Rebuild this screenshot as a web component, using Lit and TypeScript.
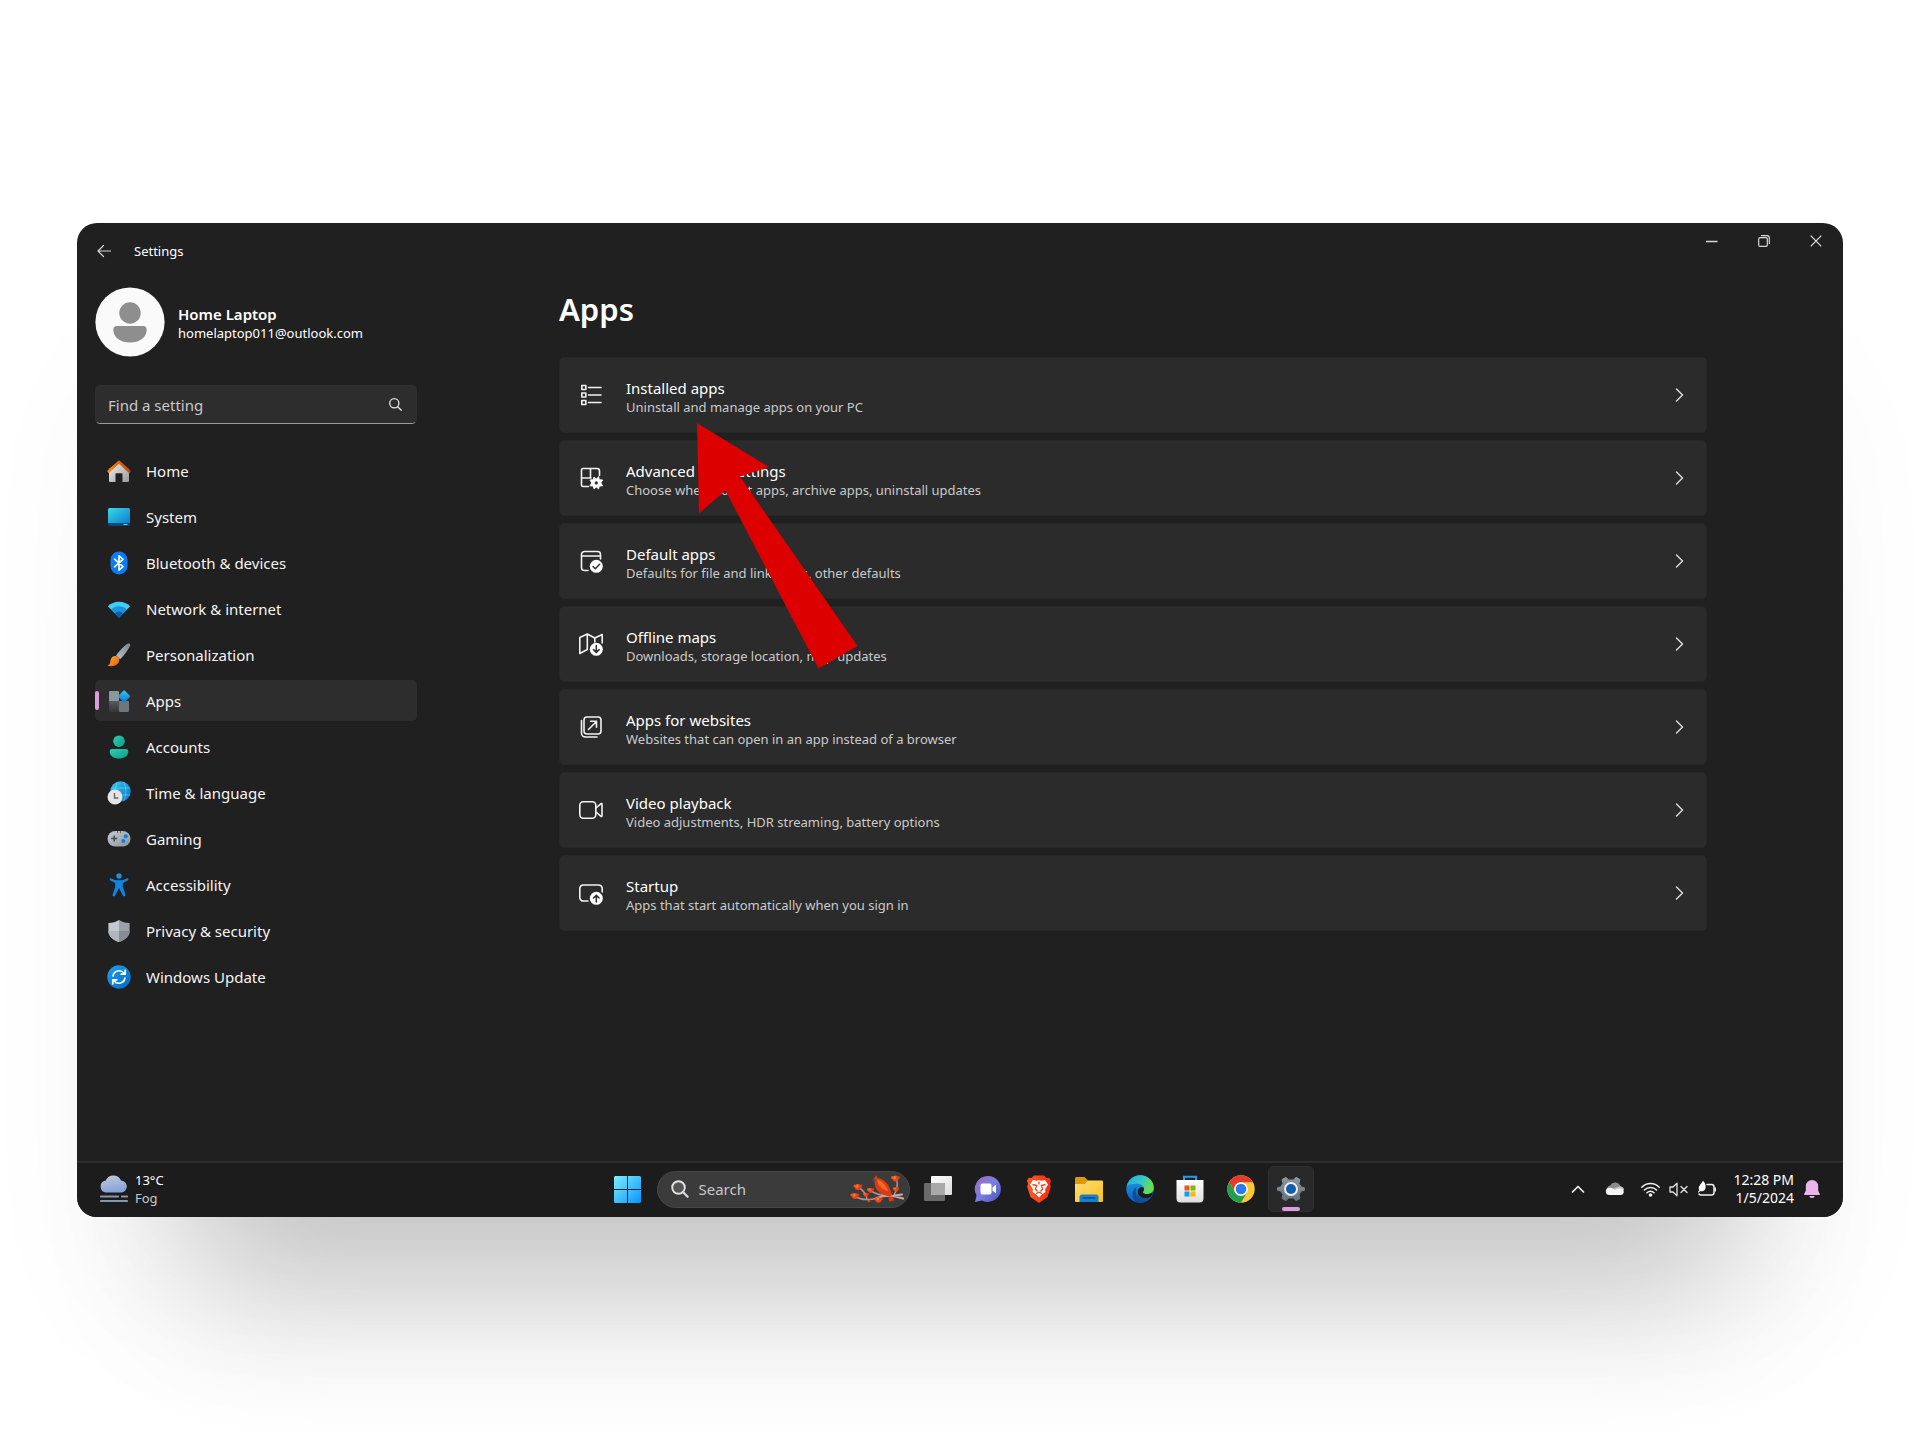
import { LitElement, html, svg, css, TemplateResult } from "lit";
import { customElement } from "lit/decorators.js";
import { classMap } from "lit/directives/class-map.js";

const icon = (size: number, box: string, body: TemplateResult) =>
  html`<svg width=${size} height=${size} viewBox=${box} fill="none" aria-hidden="true">${body}</svg>`;

const reset = css`
  * { box-sizing: border-box; }
  button, input, a { font: inherit; color: inherit; }
  button { background: none; border: 0; padding: 0; text-align: left; cursor: pointer; }
  a { text-decoration: none; }
  svg { display: block; flex: none; }
`;

/* ---------- sidebar ---------- */

const navItems: { label: string; art: TemplateResult; active?: boolean }[] = [
  {
    label: "Home",
    art: svg`
      <defs><linearGradient id="hw" x1="0" y1="0" x2="1" y2="1"><stop stop-color="#f4f4f4"/><stop offset="1" stop-color="#9a9a9a"/></linearGradient>
      <linearGradient id="hr" x1="0" y1="0" x2="1" y2="0"><stop stop-color="#f58a12"/><stop offset="1" stop-color="#c9440c"/></linearGradient></defs>
      <path d="M2 10 12 2.500l10 7.500v12a1 1 0 0 1-1 1h-5.500v-8a.8.8 0 0 0-.8-.8H9.300a.8.8 0 0 0-.8.8v8H3a1 1 0 0 1-1-1z" fill="url(#hw)"/>
      <path d="M1.800 12.200 12 3l10.200 9.200" stroke="url(#hr)" stroke-width="2.800" stroke-linecap="round" stroke-linejoin="round"/>`,
  },
  {
    label: "System",
    art: svg`
      <defs><linearGradient id="sy" x1="0" y1="0" x2="1" y2="1"><stop stop-color="#34dbe6"/><stop offset="1" stop-color="#0f7bd0"/></linearGradient></defs>
      <rect x="1" y="3" width="22" height="18" rx="1.500" fill="#0c4a76"/>
      <path d="M2.500 3h19A1.500 1.500 0 0 1 23 4.500V18H1V4.500A1.500 1.500 0 0 1 2.500 3z" fill="url(#sy)"/>
      <path d="M16.500 19.500h4" stroke="#7fc4e8" stroke-width="1"/>`,
  },
  {
    label: "Bluetooth & devices",
    art: svg`<rect x="3.500" y="0.500" width="17" height="23" rx="8.500" fill="#0a7cf5"/>
      <path d="M7.600 8.200 16 15.600l-4 3.600V4.800l4 3.600-8.400 7.400" stroke="#fff" stroke-width="1.600" stroke-linejoin="round" stroke-linecap="round"/>`,
  },
  {
    label: "Network & internet",
    art: svg`<path d="M12 20.500.800 9.300a15.900 15.900 0 0 1 22.400 0z" fill="#42cdf5"/>
      <path d="M12 20.500 4.200 12.600a11 11 0 0 1 15.600 0z" fill="#1793e2"/>
      <path d="M12 20.500 8 16.200a5.700 5.700 0 0 1 8 0z" fill="#0b5cae"/>`,
  },
  {
    label: "Personalization",
    art: svg`
      <defs><linearGradient id="pb" x1="1" y1="0" x2="0" y2="1"><stop stop-color="#7d8790"/><stop offset="1" stop-color="#b9c0c6"/></linearGradient>
      <linearGradient id="po" x1="0" y1="0" x2="1" y2="1"><stop stop-color="#ffb02e"/><stop offset="1" stop-color="#e8590c"/></linearGradient></defs>
      <path d="M21 .600c1.400-.7 2.800.6 2.100 2.100-1.900 4.200-5.700 9.500-10 13.600l-4-3.900C13 7.600 17.300 2.500 21 .600z" fill="url(#pb)"/>
      <path d="M8.200 13c2.600.2 4.200 2 4.100 4.300-.2 3.600-3.800 5.900-7.800 5.900-1.800 0-3.300-.4-3.900-1 2.400-.5 2.400-2.300 2.900-4.800.5-2.700 2.300-4.600 4.700-4.400z" fill="url(#po)"/>`,
  },
  {
    label: "Apps",
    active: true,
    art: svg`
      <defs><linearGradient id="ad" x1="0" y1="0" x2="1" y2="1"><stop stop-color="#35c7f0"/><stop offset="1" stop-color="#0a74cf"/></linearGradient>
      <linearGradient id="ag" x1="0" y1="0" x2="0" y2="1"><stop stop-color="#555a5f"/><stop offset="1" stop-color="#33373a"/></linearGradient></defs>
      <rect x="2" y="2" width="10" height="10.500" rx="1" fill="#8d959d"/>
      <rect x="2" y="12" width="10.500" height="11" rx="1" fill="url(#ag)"/>
      <rect x="12" y="12" width="10" height="11" rx="1" fill="#6f767c"/>
      <rect x="12.600" y="2.800" width="9" height="9" rx="1" transform="rotate(45 17.100 7.300)" fill="url(#ad)"/>`,
  },
  {
    label: "Accounts",
    art: svg`
      <defs><linearGradient id="ac" x1="0" y1="0" x2="1" y2="1"><stop stop-color="#2bd0b4"/><stop offset="1" stop-color="#0d9b86"/></linearGradient></defs>
      <circle cx="12" cy="6.200" r="5.800" fill="url(#ac)"/>
      <path d="M5 14h14a2.300 2.300 0 0 1 2.300 2.400c0 4.500-4.300 7.100-9.300 7.100s-9.300-2.600-9.300-7.100A2.300 2.300 0 0 1 5 14z" fill="url(#ac)"/>`,
  },
  {
    label: "Time & language",
    art: svg`
      <defs><linearGradient id="tl" x1="0" y1="0" x2="1" y2="1"><stop stop-color="#35cdea"/><stop offset="1" stop-color="#0a6fc9"/></linearGradient></defs>
      <circle cx="13.500" cy="10.500" r="10.200" fill="url(#tl)"/>
      <path d="M4.500 7h18M4 14h19M10 1.500c-2 6-2 12 0 18M17 1.500c2.500 6 2.500 12 0 18" stroke="#7be4f7" stroke-opacity=".6" stroke-width=".9"/>
      <circle cx="8" cy="16" r="7.500" fill="#e4e4e4"/>
      <path d="M7.500 12v5h3.800" stroke="#666" stroke-width="1.400"/>`,
  },
  {
    label: "Gaming",
    art: svg`
      <defs><linearGradient id="gm" x1="0" y1="0" x2="1" y2="1"><stop stop-color="#c5cad0"/><stop offset="1" stop-color="#8d949c"/></linearGradient></defs>
      <rect x=".500" y="4" width="23" height="15.500" rx="7.750" fill="url(#gm)"/>
      <path d="M7.200 8.500v6M4.200 11.500h6" stroke="#454b52" stroke-width="1.500"/>
      <path d="M10.500 4v2M13.500 4v2" stroke="#5c636b" stroke-width="1"/>
      <circle cx="18.800" cy="9.200" r="2" fill="#0f7fdb"/><circle cx="16.300" cy="14" r="2" fill="#0f7fdb"/>`,
  },
  {
    label: "Accessibility",
    art: svg`<circle cx="12" cy="3" r="2.700" fill="#1590e8"/>
      <path d="M4.300 5.400c5 2.500 10.400 2.500 15.400 0 1.500-.6 2.400 1.400 1 2.100L15.800 10v4l2.600 7.600c.5 1.700-1.800 2.500-2.600.9L12 15l-3.800 7.500c-.8 1.600-3.100.8-2.600-.9L8.200 14v-4L3.300 7.500c-1.400-.7-.5-2.700 1-2.100z" fill="#0f84e0"/>`,
  },
  {
    label: "Privacy & security",
    art: svg`<path d="M12 1c3 2 6.500 3 10.600 3v8c0 5.500-4.600 9-10.600 11z" fill="#9aa1a9"/>
      <path d="M12 1C9 3 5.500 4 1.400 4v8c0 5.500 4.600 9 10.600 11z" fill="#c3c8ce"/>
      <path d="M12 12h10.600c0 5.500-4.600 9-10.600 11z" fill="#868d95"/><path d="M12 12H1.400c0 5.500 4.600 9 10.600 11z" fill="#b0b6bc"/>`,
  },
  {
    label: "Windows Update",
    art: svg`
      <defs><linearGradient id="wu" x1="0" y1="0" x2="1" y2="1"><stop stop-color="#22a1ec"/><stop offset="1" stop-color="#0069c8"/></linearGradient></defs>
      <circle cx="12" cy="12" r="11.700" fill="url(#wu)"/>
      <path d="M6 11a6.300 6.300 0 0 1 11-3m1.200-2.800v4h-4M18 13a6.300 6.300 0 0 1-11 3m-1.200 2.800v-4h4" stroke="#fff" stroke-width="1.700" stroke-linecap="round" stroke-linejoin="round"/>`,
  },
];

@customElement("settings-sidebar")
export class SettingsSidebar extends LitElement {
  static styles = [
    reset,
    css`
      :host { display: block; width: 322px; flex: none; }
      .account { display: flex; align-items: center; gap: 13px; width: 100%; }
      .who { display: flex; flex-direction: column; padding-top: 2px; }
      .name { font-size: 15px; line-height: 20px; font-weight: 600; }
      .mail { font-size: 13px; line-height: 18px; }
      .search {
        display: flex; align-items: center; height: 39px; margin: 28px 0 26px;
        padding: 0 14px 0 12px; background: #2d2d2d; border: 1px solid #303030;
        border-bottom-color: #9a9a9a; border-radius: 5px;
      }
      .search input {
        flex: 1; min-width: 0; background: none; border: 0; outline: 0; padding: 0;
        font-size: 15px; line-height: 20px; color: #fff;
      }
      .search input::placeholder { color: #c8c8c8; opacity: 1; }
      ul { list-style: none; margin: 0; padding: 0; display: grid; gap: 5px; }
      .item {
        display: flex; align-items: center; gap: 15px; height: 41px; padding: 0 12px;
        position: relative; border-radius: 5px; font-size: 15px; line-height: 20px; color: #f4f4f4;
      }
      .active { background: #2d2d2d; }
      .active::before {
        content: ""; position: absolute; left: 0; top: 11px; width: 4px; height: 19px;
        border-radius: 2px; background: #dd9be0;
      }
    `,
  ];

  render() {
    return html`
      <button class="account">
        ${icon(70, "0 0 70 70", svg`
          <circle cx="35" cy="35" r="34.600" fill="#fafafa"/>
          <circle cx="35" cy="26" r="10.700" fill="#8e8e8e"/>
          <path d="M22 39h26a3.700 3.700 0 0 1 3.700 3.700C51.700 50.500 44.500 55.500 35 55.500S18.300 50.500 18.300 42.700A3.700 3.700 0 0 1 22 39z" fill="#8e8e8e"/>`)}
        <span class="who"><span class="name">Home Laptop</span><span class="mail">homelaptop011@outlook.com</span></span>
      </button>
      <label class="search">
        <input type="text" placeholder="Find a setting" aria-label="Find a setting" />
        ${icon(13, "0 0 13 13", svg`<circle cx="5.300" cy="5.300" r="4.600" stroke="#e6e6e6" stroke-width="1.300"/><path d="m8.700 8.700 3.900 3.900" stroke="#e6e6e6" stroke-width="1.300"/>`)}
      </label>
      <nav>
        <ul>
          ${navItems.map(
            (n) => html`<li>
              <a href="#" class=${classMap({ item: true, active: !!n.active })}>${icon(24, "0 0 24 24", n.art)}<span>${n.label}</span></a>
            </li>`
          )}
        </ul>
      </nav>
    `;
  }
}

/* ---------- settings list ---------- */

const cards: { title: string; note: string; art: TemplateResult }[] = [
  {
    title: "Installed apps",
    note: "Uninstall and manage apps on your PC",
    art: svg`<path d="M2.800 2.500h4v4h-4zM2.800 10h4v4h-4zM2.800 17.500h4v4h-4zM9.500 4.500H22M9.500 12H22M9.500 19.500H22"/>`,
  },
  {
    title: "Advanced app settings",
    note: "Choose where to get apps, archive apps, uninstall updates",
    art: svg`<path d="M9.500 20.500H4A1.500 1.500 0 0 1 2.500 19V4A1.500 1.500 0 0 1 4 2.500h14A2.500 2.500 0 0 1 20.500 5v4.500M2.500 12h9.500M11.500 2.500V12"/>
      <path d="m17.300 13-2.300-2-.7 2.800-3.300.2 1.800 2.900-1.800 2.900 3.300.2.700 2.800 2.300-1.800 2.300 1.800.7-2.800 3.300-.2-1.800-2.900 1.800-2.900-3.300-.2-.7-2.800z" fill="#fff" stroke="#fff" stroke-width="1"/>
      <circle cx="17.300" cy="16.900" r="1.600" fill="#2b2b2b" stroke="none"/>`,
  },
  {
    title: "Default apps",
    note: "Defaults for file and link types, other defaults",
    art: svg`<path d="M9 21.500H5.500a3 3 0 0 1-3-3v-13a3 3 0 0 1 3-3h13a3 3 0 0 1 3 3V10M2.500 7h19"/>
      <circle cx="17.300" cy="17.300" r="6.500" fill="#fff" stroke="none"/><path d="m14 17.500 2.300 2.200 4.300-4.400" stroke="#2b2b2b" stroke-width="1.400"/>`,
  },
  {
    title: "Offline maps",
    note: "Downloads, storage location, map updates",
    art: svg`<path d="m.800 5.500 7.500-3.500 7.500 4 7.400-3.500V11M.800 5.500v16l7.500-4M8.300 2v15.500M15.800 6v4"/>
      <circle cx="17.300" cy="17.300" r="6.500" fill="#fff" stroke="none"/><path d="M17.300 13.600v6.800m-2.800-2.800 2.800 2.800 2.800-2.800" stroke="#2b2b2b" stroke-width="1.500"/>`,
  },
  {
    title: "Apps for websites",
    note: "Websites that can open in an app instead of a browser",
    art: svg`<rect x="5" y="2" width="17" height="17" rx="3"/><path d="M2.500 5.500v12.500a4 4 0 0 0 4 4h11.500M9.500 14.500l8-8M11.500 6.200h6v6"/>`,
  },
  {
    title: "Video playback",
    note: "Video adjustments, HDR streaming, battery options",
    art: svg`<rect x=".800" y="3.800" width="16" height="16.400" rx="3.500"/><path d="m17 10 5-4.300c.5-.4 1-.1 1 .5v11.600c0 .6-.5.900-1 .5L17 14"/>`,
  },
  {
    title: "Startup",
    note: "Apps that start automatically when you sign in",
    art: svg`<path d="M9 20H4.500a3.500 3.500 0 0 1-3.700-3.500v-9A3.500 3.500 0 0 1 4.500 4h15a3.500 3.500 0 0 1 3.700 3.500V11"/>
      <circle cx="17.300" cy="17.300" r="6.500" fill="#fff" stroke="none"/><path d="M17.300 21v-6.800m-2.800 2.800 2.800-2.800 2.800 2.800" stroke="#2b2b2b" stroke-width="1.500"/>`,
  },
];

@customElement("settings-list")
export class SettingsList extends LitElement {
  static styles = [
    reset,
    css`
      :host { display: block; flex: 1; min-width: 0; padding: 0 136px 0 142px; }
      h1 { margin: 0 0 26px; font-size: 31px; line-height: 44px; font-weight: 600; color: #fff; }
      .cards { position: relative; display: grid; gap: 7px; }
      .card {
        display: flex; align-items: center; width: 100%; min-height: 76px; padding: 0 20px 0 19px; gap: 23px;
        background: #2b2b2b; border: 1px solid #272727; border-radius: 5px;
      }
      .text { flex: 1; display: flex; flex-direction: column; padding-top: 3px; }
      .title { font-size: 15px; line-height: 20px; color: #fff; }
      .note { font-size: 13px; line-height: 18px; color: #cacaca; }
      .pointer { position: absolute; left: 138px; top: 66px; pointer-events: none; }
    `,
  ];

  render() {
    return html`
      <h1>Apps</h1>
      <div class="cards">
        ${cards.map(
          (c) => html`<button class="card">
            ${icon(24, "0 0 24 24", svg`<g stroke="#f2f2f2" stroke-width="1.600" stroke-linejoin="round" stroke-linecap="round">${c.art}</g>`)}
            <span class="text"><span class="title">${c.title}</span><span class="note">${c.note}</span></span>
            ${icon(14, "0 0 14 14", svg`<path d="m4.500 1 6 6-6 6" stroke="#d8d8d8" stroke-width="1.500" stroke-linecap="round" stroke-linejoin="round"/>`)}
          </button>`
        )}
        <svg class="pointer" width="161" height="246" viewBox="0 0 161 246" aria-hidden="true">
          <path d="M0 0 72 44 43 53.500 160.500 223 121.500 245.500 28.500 67.500 2 90.500z" fill="#dc0000" />
        </svg>
      </div>
    `;
  }
}

/* ---------- taskbar ---------- */

const pinned: { name: string; active?: boolean; art: TemplateResult }[] = [
  {
    name: "Task view",
    art: svg`<defs><linearGradient id="tv" x1="0" y1="0" x2="1" y2="1"><stop stop-color="#fff"/><stop offset="1" stop-color="#dcdcdc"/></linearGradient></defs>
      <rect x="0" y="8" width="21" height="18" rx="1" fill="#6a6a6a"/>
      <rect x="7" y="1" width="21" height="19" rx="1" fill="url(#tv)"/><path d="M7 8h14v12H7z" fill="#a9a9a9"/>`,
  },
  {
    name: "Chat",
    art: svg`<defs><linearGradient id="ch" x1="0" y1="0" x2="1" y2="1"><stop stop-color="#9a6fb8"/><stop offset=".5" stop-color="#7b7fe0"/><stop offset="1" stop-color="#4a4fc0"/></linearGradient></defs>
      <path d="M14 1a13 13 0 1 1-6.200 24.500L1 27l1.600-6.500A13 13 0 0 1 14 1z" fill="url(#ch)"/>
      <rect x="6.500" y="8.500" width="11" height="11" rx="2" fill="#fff"/><path d="m18.500 12.300 3.500-2.600v8.600l-3.500-2.600z" fill="#fff"/>`,
  },
  {
    name: "Brave",
    art: svg`<defs><linearGradient id="br" x1="0" y1="0" x2="1" y2="0"><stop stop-color="#ff5a20"/><stop offset="1" stop-color="#fb2a10"/></linearGradient></defs>
      <path d="M9 .500h10l2.500 2.600 2.700-.3 1.800 3-1 3 .8 3.200-3.300 10L14 28l-8.500-6L2.200 12 3 8.800l-1-3 1.800-3 2.700.3z" fill="url(#br)"/>
      <path d="m8 5 3.500.8L14 5.300l2.500.5L20 5l3 4.500-3 5 .5 2.500-3.700 2.500L14 22.500l-2.800-3L7.500 17l.5-2.500-3-5z" fill="#fff"/>
      <path d="m7.500 9.500 4.200 1-1.300 3.500 2.100 2.500M20.500 9.500l-4.200 1 1.300 3.500-2.100 2.500M14 6.500v3M11 18.500l3-1.300 3 1.300" stroke="#fb4018" stroke-width="1.300"/>`,
  },
  {
    name: "File Explorer",
    art: svg`<defs><linearGradient id="fe" x1="0" y1="0" x2="1" y2="1"><stop stop-color="#ffe07a"/><stop offset="1" stop-color="#fcbf1a"/></linearGradient></defs>
      <path d="M0 3.500A1.500 1.500 0 0 1 1.500 2h8L12.500 5v6H0z" fill="#dc9a06"/>
      <path d="M0 9h10l2.500-3.500H27A1 1 0 0 1 28 6.500V26a1 1 0 0 1-1 1H1a1 1 0 0 1-1-1z" fill="url(#fe)"/>
      <path d="M4.500 27v-5A2.500 2.500 0 0 1 7 19.500h14a2.500 2.500 0 0 1 2.500 2.500v5z" fill="#1680d0"/><path d="M7.500 23h13" stroke="#0a4f96" stroke-width="1.600"/>`,
  },
  {
    name: "Microsoft Edge",
    art: svg`<defs><linearGradient id="e1" x1="0" y1="0" x2="1" y2=".3"><stop stop-color="#2aa7e8"/><stop offset=".6" stop-color="#37c8c0"/><stop offset="1" stop-color="#6adf4c"/></linearGradient>
      <linearGradient id="e2" x1="0" y1="0" x2="0" y2="1"><stop stop-color="#1b9de2"/><stop offset="1" stop-color="#0b63c6"/></linearGradient></defs>
      <circle cx="14" cy="14" r="13.700" fill="url(#e2)"/>
      <path d="M1 11C2.500 4.500 8 .300 14.300.300 22 .300 27.800 6 27.800 12.500c0 4-3 6.500-6.800 6.500-2.500 0-4.200-.8-4.200-1.800 0-.7 1.200-1.200 1.200-3.300C18 11 15 8.800 10.500 8.800 6.500 8.800 3 9.500 1 11z" fill="url(#e1)"/>
      <path d="M11 12c-3 4.500-.3 12.500 6.500 13.500 3 .4 5.500-.5 7.800-3.500-2.600 3.800-6.500 5.800-11 5.700C8.500 27.500 6 23 6.500 18.500 7 15 9 13 11 12z" fill="#0c4f98"/>
      <path d="M16.900 17.200c0 1 1.600 1.800 4.100 1.800 2.200 0 4-.6 5.800-2-.4 2-1 3.600-2 5-6 3-12 .500-13-4-.500-2.500.5-4.800 3-5.800 1.500-.4 3.200.5 3.200 2.200 0 1.400-1.100 2-1.100 2.800z" fill="#1d1d1d"/>
      <path d="M10.800 18c1 4.500 7 7 13.500 4.500-2 2.500-5 3.500-7.500 3-3.500-.6-6-4-6-7.500z" fill="#134f9a"/>`,
  },
  {
    name: "Microsoft Store",
    art: svg`<defs><linearGradient id="ms" x1="0" y1="0" x2="0" y2="1"><stop stop-color="#fff"/><stop offset="1" stop-color="#dedede"/></linearGradient></defs>
      <path d="M8 6V1.800h12V6" stroke="#18a2ea" stroke-width="2"/>
      <path d="M.500 5h27v18.500A4 4 0 0 1 23.500 27.500h-19A4 4 0 0 1 .500 23.500z" fill="url(#ms)"/>
      <path d="M8.500 10.500h5v5h-5z" fill="#f25022"/><path d="M14.500 10.500h5v5h-5z" fill="#7fba00"/><path d="M8.500 16.500h5v5h-5z" fill="#00a4ef"/><path d="M14.500 16.500h5v5h-5z" fill="#ffb900"/>`,
  },
  {
    name: "Google Chrome",
    art: svg`<circle cx="14" cy="14" r="13.700" fill="#fcc934"/>
      <path d="M14 .300A13.700 13.700 0 0 1 25.900 7.200H14A6.800 6.800 0 0 0 8.100 17.400L2.100 7.200A13.700 13.700 0 0 1 14 .300z" fill="#e33b2e"/>
      <path d="M2.100 7.200A13.700 13.700 0 0 0 14 27.700l5.900-10.300a6.800 6.800 0 0 1-11.800 0z" fill="#1fa04c"/>
      <circle cx="14" cy="14" r="6.800" fill="#fff"/><circle cx="14" cy="14" r="5.300" fill="#2a7bf0"/>`,
  },
  {
    name: "Settings",
    active: true,
    art: svg`<defs><linearGradient id="sg" x1="0" y1="0" x2="0" y2="1"><stop stop-color="#8d979f"/><stop offset="1" stop-color="#68727b"/></linearGradient></defs>
      <path d="M9 2.300 11.500 5h5L19 2.300l4 2.300-1 3.900 2.300 3.500 3.200.8v2.400l-3.200.8L22 19.500l1 3.900-4 2.300-2.500-2.700h-5L9 25.700l-4-2.300 1-3.900L3.700 16l-3.200-.8v-2.400l3.200-.8L6 8.500 5 4.600z" fill="url(#sg)" stroke="url(#sg)" stroke-width="1" stroke-linejoin="round"/>
      <circle cx="14" cy="14" r="7" fill="#e9eef2"/><circle cx="14" cy="14" r="5" fill="#0f5fae"/>`,
  },
];

const berry = (x: number, y: number, r: number) =>
  svg`<circle cx=${x} cy=${y} r=${r} fill="#e8481a"/><circle cx=${x - 1} cy=${y - 1} r=${r / 2} fill="#ff7a2a"/>
    <circle cx=${x - r} cy=${y - 1} r=${r / 2} fill="#ee5a1c"/><circle cx=${x + r} cy=${y - 1} r=${r / 2} fill="#d93f12"/>`;

@customElement("task-bar")
export class TaskBar extends LitElement {
  static styles = [
    reset,
    css`
      :host {
        display: grid; grid-template-columns: 1fr auto 1fr; align-items: center; flex: none;
        height: 56px; padding: 0 22px 2px 23px; background: #1c1c1c; border-top: 2px solid #2d2d2d;
      }
      .weather { justify-self: start; display: flex; align-items: center; gap: 7px; font-size: 13px; line-height: 18px; }
      .lines { display: flex; flex-direction: column; }
      .soft { color: #c9c9c9; }
      .center { display: flex; align-items: center; }
      .start { width: 46px; height: 46px; display: grid; place-items: center; }
      .search {
        display: flex; align-items: center; gap: 10px; width: 253px; height: 37px; margin: 0 3px 0 6px;
        padding: 0 4px 0 13px; background: #3b3b3b; border: 1px solid #484848; border-radius: 19px;
      }
      .search input {
        flex: 1; min-width: 0; background: none; border: 0; outline: 0; padding: 0;
        font-size: 15px; line-height: 20px; color: #fff;
      }
      .search input::placeholder { color: #c8c8c8; opacity: 1; }
      .pins { display: grid; grid-template-columns: repeat(8, 1fr); width: 404px; justify-items: center; }
      .pin { width: 46px; height: 46px; display: grid; place-items: center; position: relative; border-radius: 5px; }
      .running { background: #292929; border: 1px solid #2f2f2f; }
      .running::after {
        content: ""; position: absolute; left: 13px; bottom: 0; width: 18px; height: 4px;
        border-radius: 2px; background: #dd9be0;
      }
      .tray { justify-self: end; display: flex; align-items: center; gap: 9px; }
      .status { display: flex; align-items: center; gap: 9px; }
      .more { padding: 0 11px 0 0; }
      .cloud { padding: 0 7px 0 0; }
      .clock { display: flex; flex-direction: column; text-align: right; font-size: 14px; line-height: 18px; padding-left: 8px; }
    `,
  ];

  render() {
    return html`
      <button class="weather">
        ${icon(28, "0 0 28 28", svg`
          <defs><linearGradient id="fg" x1="0" y1="0" x2=".3" y2="1"><stop stop-color="#c3cbd8"/><stop offset="1" stop-color="#86a5d8"/></linearGradient></defs>
          <path d="M6 17.500a6 6 0 0 1-.3-11.900A8.300 8.300 0 0 1 21 5.400a6.100 6.100 0 0 1 .8 12.100z" fill="url(#fg)"/>
          <path d="M1 21.500h17M22 21.500h5M1 26h26" stroke="#8296ae" stroke-width="2.200" stroke-linecap="round"/>`)}
        <span class="lines"><span>13°C</span><span class="soft">Fog</span></span>
      </button>
      <div class="center">
        <button class="start" aria-label="Start">
          ${icon(27, "0 0 27 27", svg`
            <defs><linearGradient id="ws" x1="0" y1="0" x2="27" y2="27" gradientUnits="userSpaceOnUse"><stop stop-color="#7ceeff"/><stop offset="1" stop-color="#0a93fa"/></linearGradient></defs>
            <path d="M1 0h12v13H0V1zM14 0h12l1 1v12H14zM0 14h13v13H1l-1-1zM14 14h13v12l-1 1H14z" fill="url(#ws)"/>`)}
        </button>
        <label class="search">
          ${icon(18, "0 0 18 18", svg`<circle cx="7.500" cy="7.500" r="6.300" stroke="#e2e2e2" stroke-width="1.900" fill="#555"/><path d="m12 12 4.600 4.800" stroke="#d5dbe8" stroke-width="2.200" stroke-linecap="round"/>`)}
          <input type="text" placeholder="Search" aria-label="Search" />
          <svg width="55" height="28" viewBox="0 0 55 28" fill="none" aria-hidden="true">
            <path d="M4 21c7 4 15 4.500 23 2M46 3c2 5 2 8 0 13l-2 4M8 12c5 3 8 6 9 12M21 16c5 3 9 4.500 16 4.500" stroke="#b88c94" stroke-width="1.500" stroke-linecap="round"/>
            <path d="M27 23c6-2.500 15-3.500 26 .5M44 20.500l8-1" stroke="#d0a7a0" stroke-width="2.200" stroke-linecap="round"/>
            ${berry(5, 21, 3)}${berry(8, 12, 3)}${berry(16, 20, 2)}${berry(20.500, 15.500, 2.400)}${berry(28.500, 25, 2.800)}${berry(45.500, 3.500, 3)}${berry(46, 14.500, 2.200)}${berry(19, 26, 1.200)}
            <path d="M23.500 4.500C24 3 25 1.800 26.500.300l1 2.700c4 .2 8.500 3.500 11 7.500 1.500 2.500 2 5.500 4 9.500l-3 1.200c-4-.2-9.500-2.200-12.500-6.200-1.500-2.200-2.500-5-2-7.500z" fill="#dc3a12"/>
            <path d="M27 4.500c5.500 1 9 6 11.500 12-5-1.500-11-5-11.500-12z" fill="#f4671e"/>
            <path d="m22.500 5 2.500-1.300 1.200 2-1.400 2.500z" fill="#5f4a63"/><path d="m38.500 21.500.5 4.700h2.500l2.500-.7-1-4z" fill="#d93a12"/>
          </svg>
        </label>
        <div class="pins">
          ${pinned.map(
            (p) => html`<button class=${classMap({ pin: true, running: !!p.active })} aria-label=${p.name}>${icon(28, "0 0 28 28", p.art)}</button>`
          )}
        </div>
      </div>
      <div class="tray">
        <button class="more" aria-label="Show hidden icons">${icon(14, "0 0 14 14", svg`<path d="m1.500 10 5.500-5.500 5.500 5.500" stroke="#f0f0f0" stroke-width="1.700" stroke-linecap="round" stroke-linejoin="round"/>`)}</button>
        <button class="cloud" aria-label="OneDrive">${icon(20, "0 0 20 20", svg`
          <path d="M2 11a4.200 4.200 0 0 1 3.200-4.600A5.600 5.600 0 0 1 15.500 7.500l1.500 2-6 4z" fill="#8c8c8c"/>
          <path d="M8 9.500 15.500 7.300A4 4 0 0 1 19 11l-4 2z" fill="#c4c4c4"/>
          <path d="M4.300 16A3.600 3.600 0 0 1 4.500 8.800c2.200-.4 3.800.9 5.500 1.900 1.800-.9 4.500-1.500 6.500-.9A3.200 3.200 0 0 1 16.300 16z" fill="#f4f4f4"/>`)}</button>
        <button class="status" aria-label="Network, volume and battery">
          ${icon(19, "0 0 19 19", svg`<path d="M.800 7.200a12.300 12.300 0 0 1 17.400 0M3.400 10a8.600 8.600 0 0 1 12.200 0M6 12.800a5 5 0 0 1 7 0" stroke="#f0f0f0" stroke-width="1.500" stroke-linecap="round"/><circle cx="9.500" cy="15" r="1.800" fill="#f0f0f0"/>`)}
          ${icon(19, "0 0 19 19", svg`<path d="M1 7h3l4-3.800v12.600L4 12H1zM12 6.500l6 6M18 6.500l-6 6" stroke="#e4e4e4" stroke-width="1.300" stroke-linejoin="round" stroke-linecap="round"/>`)}
          ${icon(19, "0 0 19 19", svg`<path d="M10 4.500h4.500A2.500 2.500 0 0 1 17 7v5.500a2.500 2.500 0 0 1-2.500 2.500H4a2.500 2.500 0 0 1-2-1" stroke="#f0f0f0" stroke-width="1.500" stroke-linecap="round"/><path d="M17.500 7.500h1.500v4h-1.500z" fill="#f0f0f0"/><path d="M6 .800C8.500 3 9.500 7 8 9.500c-1 1.600-3 2.200-4.800 1.500L1.700 12.800 1 12l1.200-1.800C.5 6.500 4 4.300 6 .800z" fill="#fff"/>`)}
        </button>
        <button class="clock"><span>12:28 PM</span><span>1/5/2024</span></button>
        <button aria-label="Notifications">${icon(18, "0 0 18 18", svg`<path d="M9 0a6.200 6.200 0 0 1 6.200 6.200v4.600L16.800 14c.2.600-.1 1-.7 1H1.900c-.6 0-.9-.4-.7-1l1.600-3.200V6.200A6.200 6.200 0 0 1 9 0zM6.300 16h5.400a2.700 2 0 0 1-5.400 0z" fill="#ecb4ee"/>`)}</button>
      </div>
    `;
  }
}

/* ---------- page ---------- */

@customElement("app-root")
export class AppRoot extends LitElement {
  static styles = [
    reset,
    css`
      :host {
        display: flex; box-sizing: border-box; min-height: 100vh; padding: 223px 77px; background: #fff;
        font-family: "Noto Sans", "Open Sans", sans-serif; color: #fff; overflow: hidden;
      }
      .window {
        flex: 1; min-width: 0; display: flex; flex-direction: column; overflow: hidden;
        background: #202020; border-radius: 20px;
        box-shadow: 0 190px 140px -115px rgba(0, 0, 0, 0.2), 0 120px 150px -40px rgba(0, 0, 0, 0.05);
      }
      .titlebar { display: flex; align-items: flex-start; height: 64px; padding: 0 1px 0 20px; }
      .caption { display: flex; align-items: center; gap: 23px; padding-top: 19px; font-size: 13px; line-height: 18px; flex: 1; }
      .controls { display: flex; }
      .control { width: 52px; height: 36px; display: grid; place-items: center; }
      .body { flex: 1; display: flex; padding-left: 18px; }
    `,
  ];

  render() {
    return html`
      <div class="window">
        <header class="titlebar">
          <div class="caption">
            <button aria-label="Back">${icon(14, "0 0 14 14", svg`<path d="M13.500 7H1m5.500-5.500L1 7l5.500 5.500" stroke="#d6d6d6" stroke-width="1.200" stroke-linecap="round" stroke-linejoin="round"/>`)}</button>
            <span>Settings</span>
          </div>
          <div class="controls">
            <button class="control" aria-label="Minimize">${icon(12, "0 0 12 12", svg`<path d="M0 6.500h11.500" stroke="#d8d8d8" stroke-width="1.300"/>`)}</button>
            <button class="control" aria-label="Restore">${icon(12, "0 0 12 12", svg`<rect x=".700" y="2.700" width="8.600" height="8.600" rx="1.400" stroke="#d8d8d8" stroke-width="1.200"/><path d="M3 .700h6A2.300 2.300 0 0 1 11.300 3v6" stroke="#d8d8d8" stroke-width="1.200"/>`)}</button>
            <button class="control" aria-label="Close">${icon(12, "0 0 12 12", svg`<path d="m.700.700 10.600 10.600M11.300.700.700 11.300" stroke="#e0e0e0" stroke-width="1.200"/>`)}</button>
          </div>
        </header>
        <div class="body">
          <settings-sidebar></settings-sidebar>
          <settings-list></settings-list>
        </div>
        <task-bar></task-bar>
      </div>
    `;
  }
}
